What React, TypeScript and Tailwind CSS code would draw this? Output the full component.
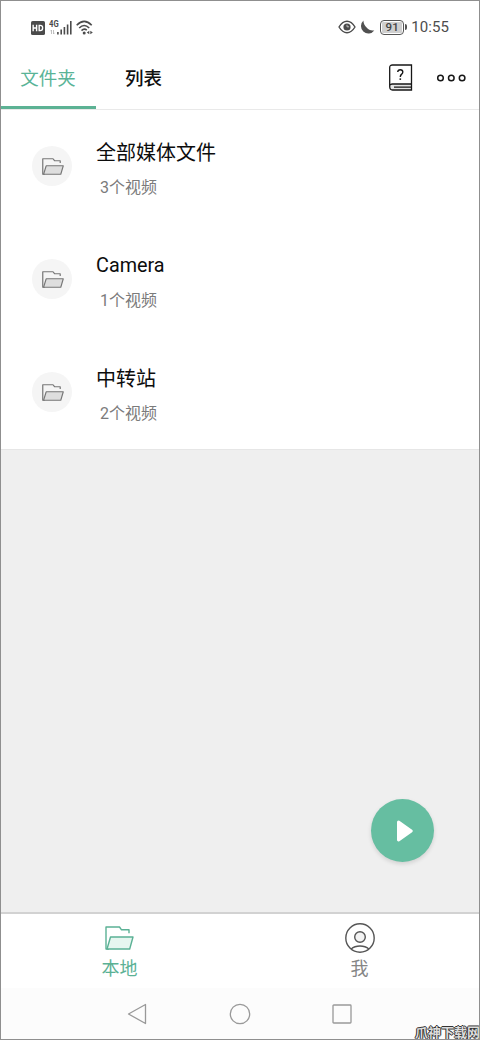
import type { ReactNode } from "react";

const SANS = "font-[Roboto,'Noto_Sans_CJK_SC',sans-serif]";

function HdIcon() {
  return (
    <svg className="ml-[31px] mt-[20px] h-[14px] w-[14px] shrink-0" viewBox="0 0 13 13">
      <rect width="13" height="13" rx="1.5" fill="#4b4b4b" />
      <path d="M2 3.500v6M5.200 3.500v6M2 6.500h3.200M7.600 4.100v4.800h.9q2.300 0 2.300-2.400T8.500 4.100z" fill="none" stroke="#fff" strokeWidth="1.300" />
    </svg>
  );
}

function SignalIcon() {
  return (
    <div className="relative ml-[4px] mt-[19px] h-[15px] w-[24px] shrink-0">
      <span className="absolute left-0 top-0 origin-left scale-x-90 text-[8.500px] font-bold leading-[8px] text-[#4b4b4b]">4G</span>
      <svg className="h-[15px] w-[24px]" viewBox="0 0 24 15">
        <path d="M2.500 10v4M1.500 11.200l1-1.200M4.500 10v4M5.500 12.800l-1 1.200" fill="none" stroke="#b0b0b0" strokeWidth="0.8" />
        <path d="M8.900 12v2.500M12.200 9.500v5M15.400 7v7.500M18.600 4.500v10M21.800 1v13.500" fill="none" stroke="#4b4b4b" strokeWidth="1.600" />
      </svg>
    </div>
  );
}

function WifiIcon() {
  return (
    <svg className="ml-[3px] mt-[19px] h-[15px] w-[17px] shrink-0" viewBox="0 0 17 15">
      <path d="M.700 5.200Q8.200-2.400 15.700 5.200M3.200 8Q8.200 3 13.200 8M5.500 10.600Q8.200 8 10.800 10.200" fill="none" stroke="#4b4b4b" strokeWidth="1.600" />
      <circle cx="8.200" cy="13" r="1.500" fill="#4b4b4b" />
      <path d="m10.800 12.500 2.500-1.800v3.600zM16.800 12.500l-2.500-1.800v3.600z" fill="#4b4b4b" />
    </svg>
  );
}

function StatusBar() {
  return (
    <div className="flex h-[49px] shrink-0 items-start">
      <div className="-ml-px flex">
        <HdIcon />
        <SignalIcon />
        <WifiIcon />
      </div>
      <div className="ml-auto flex items-center pr-[30px] pt-[15px]">
        <svg className="h-[14px] w-[18px]" viewBox="0 0 18 14">
          <path d="M1 7Q4.500 1.300 9 1.300T17 7Q13.500 12.700 9 12.700T1 7Z" fill="none" stroke="#4b4b4b" strokeWidth="1.400" />
          <circle cx="9" cy="7" r="3.600" fill="#4b4b4b" />
          <path d="M9 4.800V6.800h2" fill="none" stroke="#c8c8c8" strokeWidth="0.900" />
        </svg>
        <svg className="ml-[3px] h-[15px] w-[16px]" viewBox="0 0 16 15">
          <path d="M4.500.500A7.400 7.400 0 1 0 15.300 10.500C12 11 9.400 9.900 7.600 7.600C5.900 5.400 4.200 3.300 4.500.500Z" fill="#505050" />
        </svg>
        <div className="ml-[5px] flex h-[15px] w-[24px] items-center justify-center rounded-[4px] border border-[#555] p-px">
          <div className="flex h-full w-full items-center justify-center rounded-[1px] bg-[#cfcfcf] pt-px text-[11.500px] font-medium leading-none text-[#444]">91</div>
        </div>
        <div className="ml-[1px] h-[6px] w-[2px] rounded-r bg-[#555]" />
        <span className="ml-[4px] pt-px text-[15px] leading-[21px] tracking-[0.100px] text-[#4d4d4d]">10:55</span>
      </div>
    </div>
  );
}

function TopTabs() {
  return (
    <div className="flex h-[60px] shrink-0 border-b border-[#e9e9e9]">
      <div className="flex w-[95px] justify-center border-b-[3px] border-[#5cb294] pr-px pt-[15px] text-[18.500px] leading-[28px] text-[#59b497]">
        文件夹
      </div>
      <div className="ml-[29px] pt-[15px] text-[18.500px] font-medium leading-[28px] text-[#101010]">列表</div>
      <svg className="ml-auto mt-[14px] h-[28px] w-[24px]" viewBox="0 0 24 28">
        <path d="M22.500 20H3.500Q.700 20 .700 22.500T3.500 26H22.500Z" fill="#e4e4e4" />
        <path d="M22.500 20H3.500Q.700 20 .700 22.500V3.500Q.700 1 3.500 1H22.500V26H3.500Q.700 26 .700 22.500M5 23.200h17.500" fill="none" stroke="#171717" strokeWidth="1.300" />
        <path d="M8.700 8Q8.900 5.700 11.300 5.700Q13.800 5.700 13.800 8Q13.800 9.300 12.500 10.400Q11.300 11.400 11.300 12.900" fill="none" stroke="#171717" strokeWidth="1.400" />
        <circle cx="11.300" cy="15.100" r=".950" fill="#171717" />
      </svg>
      <svg className="ml-[24px] mr-[13px] mt-[23px] h-[9px] w-[29px]" viewBox="0 0 29 9">
        <g fill="none" stroke="#171717" strokeWidth="1.500">
          <circle cx="3.500" cy="5" r="2.800" />
          <circle cx="14.300" cy="5" r="2.800" />
          <circle cx="25.100" cy="5" r="2.800" />
        </g>
      </svg>
    </div>
  );
}

function FolderIcon({ className, front, stroke }: { className: string; front: string; stroke: number }) {
  return (
    <svg className={className} viewBox="0 0 29 24" preserveAspectRatio="none" fill="none" stroke="currentColor" strokeWidth={stroke} strokeLinejoin="round">
      <path d="M4 23H1V1h13.500l2 2.800H24v3.400" />
      <path d="M5.500 11H28L24.700 23H2Z" fill={front} />
    </svg>
  );
}

function FolderRow({ name, count, latin = false }: { name: string; count: string; latin?: boolean }) {
  return (
    <div className="flex h-[113px] items-start pl-[31px] pt-[36px]">
      <div className="flex h-[40px] w-[40px] items-center justify-center rounded-full bg-[#f5f5f5]">
        <FolderIcon className="ml-px mt-px h-[17px] w-[22px] text-[#777]" front="#dedede" stroke={1.6} />
      </div>
      <div className="-mt-[9px] ml-[24px]">
        <div className={`h-[31px] leading-[32px] text-[#0c0c0c] ${latin ? "text-[19.800px]" : "text-[20px]"}`}>{name}</div>
        <div className="ml-[4px] mt-[8px] text-[16px] leading-[24px] text-[#7b7b7b]">{count}</div>
      </div>
    </div>
  );
}

function BottomItem({ label, color, children }: { label: string; color: string; children: ReactNode }) {
  return (
    <div className={`flex w-1/2 flex-col items-center ${color}`}>
      <div className="mt-[8px] flex h-[32px] items-center">{children}</div>
      <span className="mt-px text-[18px] leading-[28px]">{label}</span>
    </div>
  );
}

export default function App() {
  return (
    <div className={`relative flex h-[1040px] w-[480px] flex-col overflow-hidden border border-[#8f8f8f] bg-white ${SANS}`}>
      <StatusBar />
      <TopTabs />
      <div className="shrink-0">
        <FolderRow name="全部媒体文件" count="3个视频" />
        <FolderRow name="Camera" count="1个视频" latin />
        <FolderRow name="中转站" count="2个视频" />
      </div>
      <main className="relative flex-1 border-t border-[#e6e6e6] bg-[#efefef]">
        <button aria-label="播放" className="absolute bottom-[50px] right-[45px] flex h-[63px] w-[63px] items-center justify-center rounded-full bg-[#66bea1] shadow-[0_2px_4px_rgba(0,0,0,0.130)]">
          <svg className="ml-[4px] mt-px h-[22px] w-[18px]" viewBox="0 0 18 22">
            <path d="M2.500 2 15.200 11 2.500 20Z" fill="#fff" stroke="#fff" strokeWidth="3" strokeLinejoin="round" />
          </svg>
        </button>
      </main>
      <nav className="flex h-[76px] shrink-0 border-t-2 border-[#d2d2d2] bg-white">
        <BottomItem label="本地" color="pr-[2px] text-[#5bb195]">
          <FolderIcon className="h-[24px] w-[29px]" front="#e7f6f0" stroke={1.4} />
        </BottomItem>
        <BottomItem label="我" color="text-[#858585]">
          <svg className="h-[30px] w-[30px]" viewBox="0 0 30 30" fill="none" stroke="#555" strokeWidth="1.400">
            <circle cx="15" cy="15" r="14.200" />
            <circle cx="15" cy="14" r="5.300" fill="#f4f4f4" />
            <path d="M6.200 26Q9.500 23 15 23T23.800 26" />
          </svg>
        </BottomItem>
      </nav>
      <div className="flex h-[51px] shrink-0 items-start justify-center gap-[80px] bg-[#fcfcfc] pt-[15px]">
        <svg className="h-[22px] w-[22px]" viewBox="0 0 22 22" fill="none" stroke="#999" strokeWidth="1.300" strokeLinejoin="round">
          <path d="M18.500 1.500v19L1.500 11Z" />
        </svg>
        <svg className="h-[22px] w-[22px]" viewBox="0 0 22 22" fill="none" stroke="#999" strokeWidth="1.300">
          <circle cx="11" cy="11" r="9.700" />
        </svg>
        <svg className="h-[22px] w-[22px]" viewBox="0 0 22 22" fill="none" stroke="#999" strokeWidth="1.300">
          <rect x="2" y="2" width="18" height="18" rx=".800" />
        </svg>
      </div>
      <span className="absolute -bottom-px -right-px whitespace-nowrap text-[13px] font-bold leading-[14px] text-[#dcdcdc] [text-shadow:1px_0_#333,-1px_0_#333,0_1px_#333,0_-1px_#333]">
        爪神下载网
      </span>
    </div>
  );
}
